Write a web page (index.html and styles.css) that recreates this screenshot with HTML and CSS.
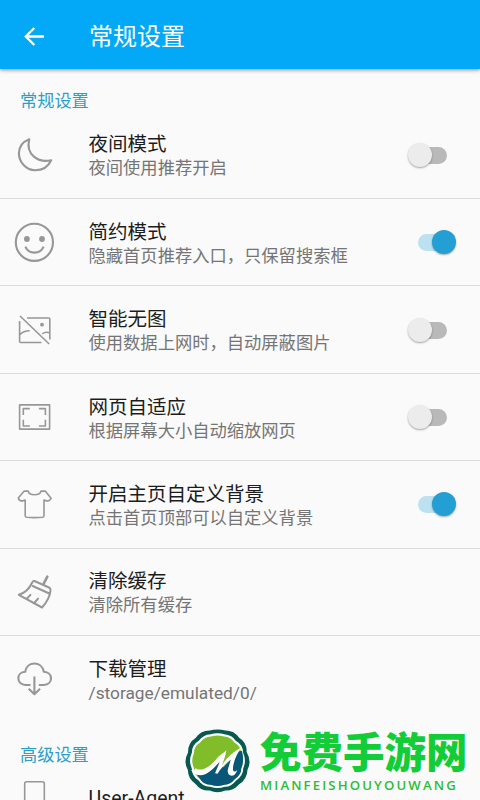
FILE: index.html
```html
<!DOCTYPE html>
<html lang="zh-CN">
<head>
<meta charset="utf-8">
<title>常规设置</title>
<link rel="stylesheet" href="styles.css">
</head>
<body>
<div class="screen">
  <header class="bar">
    <svg class="back" viewBox="0 0 24 24"><path d="M22 11.500H4M12.300 3L3.800 11.500l8.500 8.500"/></svg>
    <h1>常规设置</h1>
  </header>
  <main>
    <h2>常规设置</h2>
    <section class="row">
      <svg class="icon bold" viewBox="0 0 40 40"><path d="M15.3 4.2C8.2 7 4.9 12.2 4.9 18.3C4.9 27 12 35.2 21.2 35.2C29 35.2 34.3 31.5 37.2 25.2C24.6 28.3 11.2 19.5 15.3 4.2Z"/></svg>
      <div class="text"><h3>夜间模式</h3><p>夜间使用推荐开启</p></div>
      <span class="switch"></span>
    </section>
    <section class="row">
      <svg class="icon bold" viewBox="0 0 40 40"><circle cx="20.4" cy="20.3" r="18.6"/><circle class="dot" cx="12.9" cy="17" r="2.9"/><circle class="dot" cx="28" cy="17" r="2.9"/><path d="M11.4 24.7C14.5 32.6 26.3 32.6 29.6 24.7"/></svg>
      <div class="text"><h3>简约模式</h3><p>隐藏首页推荐入口，只保留搜索框</p></div>
      <span class="switch on"></span>
    </section>
    <section class="row">
      <svg class="icon" viewBox="0 0 40 40"><path d="M6 6L35.2 34M13 8H34.8Q35.8 8 35.8 9V29.5M5.6 11V31.5Q5.6 32.5 6.6 32.5H27.5M5.8 24.7Q10 20.6 15.7 20.8M28.3 23.8Q31.5 21.4 35.5 22.7"/><circle class="dot" cx="28" cy="14.7" r="1.9"/></svg>
      <div class="text"><h3>智能无图</h3><p>使用数据上网时，自动屏蔽图片</p></div>
      <span class="switch"></span>
    </section>
    <section class="row">
      <svg class="icon" viewBox="0 0 40 40"><path d="M5.6 7.9H35.6V32.1H5.6ZM9.3 18V11.6H15.8M24.9 11.6H31.4V18M31.4 22.8V29H24.9M15.8 29H9.3V22.8"/></svg>
      <div class="text"><h3>网页自适应</h3><p>根据屏幕大小自动缩放网页</p></div>
      <span class="switch"></span>
    </section>
    <section class="row">
      <svg class="icon" viewBox="0 0 40 40"><path d="M14.2 7.1C15 12 26 12 27 7.1H31.2L37.1 14.2Q36 16.8 33.2 17.1L30 16.1V31.8Q30 33 28.7 33.2Q20 34 12.5 33.2Q11.2 33 11.2 31.8V16.1L8 17.1Q5 16.6 4.3 14L10.2 7.1Z"/></svg>
      <div class="text"><h3>开启主页自定义背景</h3><p>点击首页顶部可以自定义背景</p></div>
      <span class="switch on"></span>
    </section>
    <section class="row">
      <svg class="icon broom" viewBox="0 0 40 40"><path d="M20.500 9L35 15.500Q36.700 16.300 36.500 18.200Q36 26.500 28 35.500L4.800 22.800C11.500 20.800 15.500 16.500 18.200 10.500Q19 8.500 20.500 9ZM18.700 14L35.300 21.500M12.500 27L16.500 22.900M20.300 31L24 26.600"/><path class="handle" d="M33.300 4.600L29.600 11.800"/></svg>
      <div class="text"><h3>清除缓存</h3><p>清除所有缓存</p></div>
    </section>
    <section class="row last">
      <svg class="icon bold" viewBox="0 0 40 40"><path d="M16.5 26H11.6C2 25.6 2 13 11.2 12.8C13 1.7 27.8 1.7 29.8 12.8C39.5 13.4 39.3 25.5 29.8 26H24.8M20.4 17.6V34.8M14.7 29.8L20.4 35.2L26.1 29.8"/></svg>
      <div class="text"><h3>下载管理</h3><p>/storage/emulated/0/</p></div>
    </section>
    <h2>高级设置</h2>
    <section class="row last">
      <svg class="icon" viewBox="0 0 40 40"><rect x="10.7" y="-6.2" width="19.6" height="48" rx="2"/></svg>
      <div class="text"><h3>User-Agent</h3></div>
    </section>
  </main>
  <aside class="mark">
    <svg class="logo" viewBox="0 0 68 68">
      <path class="rim" d="M26 2.500Q34 .5 42 2.500Q51 2.500 56 10Q64 15 63.500 24Q69 34 64.500 42Q64 52 56 57Q50 64 42 63.500Q34 67 26 63.500Q17 64 12 57Q4 52 4 43Q-1 34 4 25Q4 15 12 10Q17 2.500 26 2.500Z"/>
      <path class="lime" d="M27 7.500Q34 5.500 41 7.500Q48 8 52 14Q59 18 59 25.500Q62.500 33 59 41Q59 48 52 52.500Q47 59 41 58.500Q34 61 27 58.500Q20 59 15.500 52.500Q9 48 9 41Q5.500 33 9 25.500Q9 18 15.500 14Q20 8 27 7.500Z"/>
      <path class="sea" d="M13 47Q25 46 34 33L40 40L55 24L58.800 23Q61.500 33 58.200 41Q58 47.500 51.500 52Q46.500 58 41 57.500Q34 60 27 57.500Q20.500 58 16.500 52Z"/>
      <path class="wave" d="M7 42.500C9 43 11 43 12 40.500C13 42.500 16 42 18 42C25 41 31 34 35 29C38 26 41 25 43 22.500C42.500 28 40 33 38.500 38C43 30 50 24 59 19.500C54 25 51.500 31 50 38C49 44 50.500 46 54 42.500C52 51 43 50 44.500 42L47.500 32C42 36 37.500 41 34 46.500L31.500 46L36.500 34C30 41 23 50 13 47.500Q9 46 7 42.500Z"/>
    </svg>
    <div class="words"><b>免费手游网</b><small>MIANFEISHOUYOUWANG</small></div>
  </aside>
</div>
</body>
</html>
```

FILE: styles.css
```css
* { box-sizing: border-box; }
body, h1, h2, h3, p { margin: 0; font-weight: 400; }
body { font-family: Roboto, "Noto Sans CJK SC", sans-serif; }
.screen {
  position: relative;
  width: 480px;
  height: 800px;
  overflow: hidden;
  background: #fafafa;
}
.bar {
  display: flex;
  align-items: center;
  height: 69px;
  padding: 4px 0 0 22px;
  background: #03a9f7;
  color: #fff;
  box-shadow: 0 1px 4px rgba(0, 0, 0, .45);
}
.back { width: 24px; height: 24px; margin-right: 43px; fill: none; stroke: #fff; stroke-width: 2.3; }
h1 { padding-top: 1px; font-size: 24px; line-height: 36px; }
h2 { height: 42.8px; padding: 20px 0 0 20px; font-size: 17.2px; line-height: 24px; color: #2c9fc9; }
.row {
  display: flex;
  align-items: center;
  height: 87.35px;
  padding: 0 23px 0 14px;
  border-bottom: 1.4px solid #dadada;
}
.last { border-bottom-color: transparent; }
.last + h2 { height: 42px; padding-top: 19.500px; }
.icon {
  flex: none;
  width: 40px;
  height: 40px;
  margin-right: 34.500px;
  overflow: visible;
  fill: none;
  stroke: #979797;
  stroke-width: 1.6;
  stroke-linejoin: round;
}
.bold { stroke-width: 2.1; }
.broom { stroke-width: 2; stroke-linecap: round; }
.handle { stroke-width: 2.6; }
.dot { fill: #979797; stroke: none; }
.text { flex: 1; height: 48px; padding-top: 1.500px; white-space: nowrap; }
h3 { font-size: 19.500px; line-height: 25px; color: #1c1c1c; }
p { font-size: 17.3px; line-height: 23px; color: #757575; }
.switch {
  position: relative;
  flex: none;
  width: 49px;
  height: 26px;
}
.switch::before {
  content: "";
  position: absolute;
  left: 10px;
  top: 5px;
  width: 29px;
  height: 17px;
  border-radius: 9px;
  background: #b9b9b9;
}
.switch::after {
  content: "";
  position: absolute;
  left: 0;
  top: 1px;
  width: 24px;
  height: 24px;
  border-radius: 50%;
  background: #ececec;
  box-shadow: 0 1px 2px rgba(0, 0, 0, .35);
}
.switch.on::before { background: #bce1f0; }
.switch.on::after { left: 24px; background: #239fd3; }
.mark { position: absolute; left: 184px; top: 728px; display: flex; }
.logo { width: 67px; height: 67px; }
.rim { fill: #07594f; }
.lime { fill: #80bd29; stroke: #fff; stroke-width: 2.2; }
.sea { fill: #075779; }
.wave { fill: #fff; }
.words { display: flex; flex-direction: column; margin-left: 9px; color: #12cc38; }
.words b { height: 49px; font: 900 41.500px/44px "Noto Sans CJK SC", sans-serif; }
.words small { font: 600 13.200px/16px "Open Sans", sans-serif; letter-spacing: 2.1px; color: #2fbd32; }
```
